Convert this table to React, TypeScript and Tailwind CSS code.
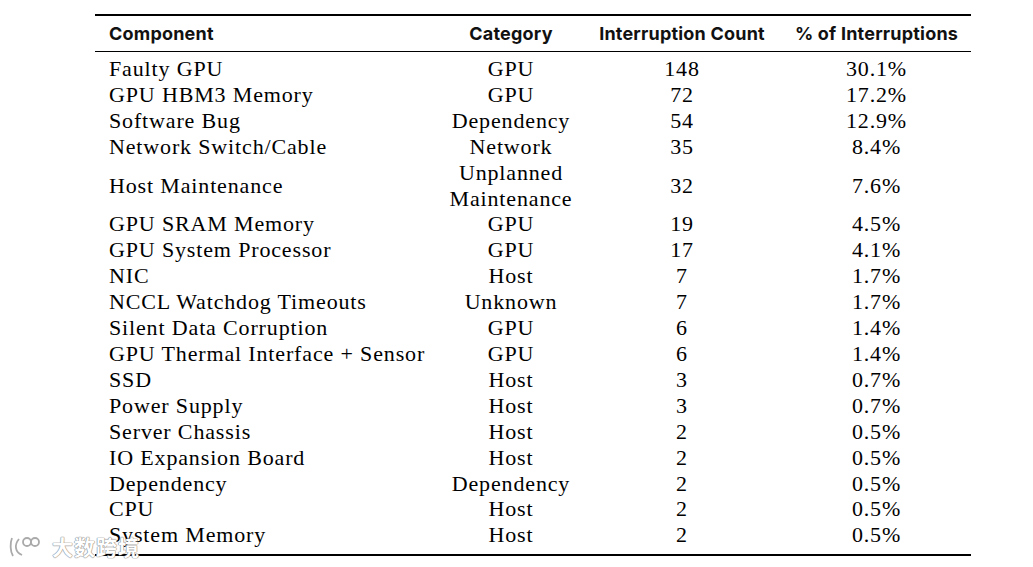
const rows: { name: string; cat: string[]; count: string; pct: string }[] = [
  { name: "Faulty GPU", cat: ["GPU"], count: "148", pct: "30.1%" },
  { name: "GPU HBM3 Memory", cat: ["GPU"], count: "72", pct: "17.2%" },
  { name: "Software Bug", cat: ["Dependency"], count: "54", pct: "12.9%" },
  { name: "Network Switch/Cable", cat: ["Network"], count: "35", pct: "8.4%" },
  { name: "Host Maintenance", cat: ["Unplanned", "Maintenance"], count: "32", pct: "7.6%" },
  { name: "GPU SRAM Memory", cat: ["GPU"], count: "19", pct: "4.5%" },
  { name: "GPU System Processor", cat: ["GPU"], count: "17", pct: "4.1%" },
  { name: "NIC", cat: ["Host"], count: "7", pct: "1.7%" },
  { name: "NCCL Watchdog Timeouts", cat: ["Unknown"], count: "7", pct: "1.7%" },
  { name: "Silent Data Corruption", cat: ["GPU"], count: "6", pct: "1.4%" },
  { name: "GPU Thermal Interface + Sensor", cat: ["GPU"], count: "6", pct: "1.4%" },
  { name: "SSD", cat: ["Host"], count: "3", pct: "0.7%" },
  { name: "Power Supply", cat: ["Host"], count: "3", pct: "0.7%" },
  { name: "Server Chassis", cat: ["Host"], count: "2", pct: "0.5%" },
  { name: "IO Expansion Board", cat: ["Host"], count: "2", pct: "0.5%" },
  { name: "Dependency", cat: ["Dependency"], count: "2", pct: "0.5%" },
  { name: "CPU", cat: ["Host"], count: "2", pct: "0.5%" },
  { name: "System Memory", cat: ["Host"], count: "2", pct: "0.5%" },
];

const cols = "grid grid-cols-[345px_142px_200px_189px]";

export default function App() {
  return (
    <div className="relative w-[1033px] h-[567px] bg-white overflow-hidden">
      <div className="ml-[95px] mt-[14px] w-[876px] border-t-2 border-b-2 border-black">
        {/* header */}
        <div
          className={`${cols} h-[36px] items-center border-b border-black text-[18px] font-bold tracking-[0.2px] text-[#111]`}
          style={{ fontFamily: "Inter, 'Noto Sans', sans-serif" }}
        >
          <div className="pl-[14px]">Component</div>
          <div className="text-center">Category</div>
          <div className="text-center">Interruption Count</div>
          <div className="text-center">% of Interruptions</div>
        </div>
        {/* body */}
        <div
          className="pt-[4px] pb-[6px] text-[22px] leading-[25.9px] text-black tracking-[0.85px]"
          style={{ fontFamily: "'Liberation Serif', 'DejaVu Serif', serif" }}
        >
          {rows.map((r) => (
            <div key={r.name} className={`${cols} items-center`}>
              <div className="pl-[14px] whitespace-nowrap">{r.name}</div>
              <div className="text-center whitespace-nowrap">
                {r.cat.map((c) => (
                  <div key={c}>{c}</div>
                ))}
              </div>
              <div className="text-center">{r.count}</div>
              <div className="text-center">{r.pct}</div>
            </div>
          ))}
        </div>
      </div>

      {/* watermark */}
      <div className="absolute left-[8px] top-[531px] flex items-center gap-[6px] select-none">
        <svg width="38" height="24" viewBox="0 0 38 24" fill="none" stroke="#aaa" strokeWidth="1.8">
          <path d="M4 3 C2 8 2 16 5 21 M11 4 C6 10 7 17 14 20" />
          <circle cx="19" cy="7" r="4" fill="#fff" />
          <circle cx="27" cy="7" r="4" fill="#fff" />
        </svg>
        <span
          className="text-[21px] font-bold text-white tracking-[1px]"
          style={{
            fontFamily: "'Noto Sans CJK SC', sans-serif",
            textShadow: "0 0 1px #888, 0 0 1px #888, 0 0 1px #888",
          }}
        >
          大数跨境
        </span>
      </div>
    </div>
  );
}
